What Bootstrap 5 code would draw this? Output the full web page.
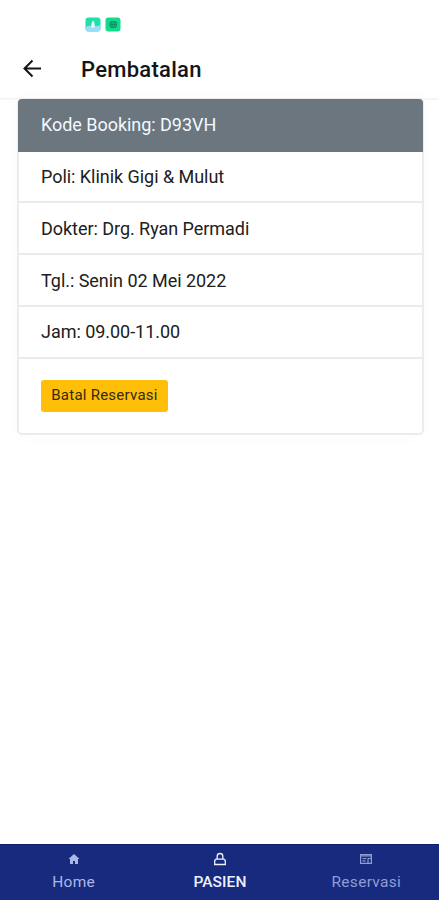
<!DOCTYPE html>
<html lang="id">
<head>
<meta charset="utf-8">
<meta name="viewport" content="width=device-width, initial-scale=1">
<title>Pembatalan</title>
<link href="https://cdn.jsdelivr.net/npm/bootstrap@5.3.0/dist/css/bootstrap.min.css" rel="stylesheet">
<style>
body{font-family:Roboto,"Liberation Sans",sans-serif;color:#151515;background:#fff}
.screen{height:900px;overflow:hidden}
.status-strip{height:40px;padding:17px 0 0 85px;gap:4px}
.status-strip svg{width:16px;height:15px}
.top-bar{height:58px;padding-left:20px;box-shadow:0 1px 2px #ececed}
.top-bar h1{font-size:22px;font-weight:500;letter-spacing:.28px;margin-left:37px;padding-top:2px}
.booking{margin:0 15px 0 17px;height:336.5px;border:2px solid #ececec;border-radius:5px;box-shadow:0 0 18px #fafafa}
.booking .list-group-item{height:51.8px;flex-shrink:0;padding:0 22px;font-size:18px;letter-spacing:-.04px;border-color:#ebebeb;border-width:0 0 2px;color:#202020}
.booking .list-group-item.code-row{height:52.6px;background:#6b767e;color:#f3f9ff;margin:-1px -1px 0;padding:0 23px 2px;border:0;border-radius:4px 4px 0 0}
.booking .list-group-item.action-row{height:73.7px;border:0;border-radius:0 0 4px 4px}
.btn-cancel{width:127px;height:32px;padding:0;font-size:15px;letter-spacing:.25px;border:0;border-radius:3px;background:#ffbf08;color:#332b12}
.tab-bar{height:56px;background:#182a7d;border-top:1px solid #10206d}
.tab-bar .nav-link{padding:7px 0 0 1px;color:#8f9dd6;font-size:15.500px;line-height:22px;letter-spacing:.3px}
.tab-bar .nav-link svg{width:14px;height:14px;margin-bottom:5px}
.tab-bar .nav-link.tab-home{color:#a9b8e8}
.tab-bar .nav-link.active{color:#eef1ff;letter-spacing:.1px;font-weight:500}
</style>
</head>
<body>
<div class="screen d-flex flex-column">
  <div class="status-strip d-flex">
    <svg viewBox="0 0 16 15"><rect x=".5" y=".5" width="15" height="14" rx="3" fill="#20dfa8"/><path d="M.5 10q4-2 7-1t8-1v3.5a3 3 0 0 1-3 3h-9a3 3 0 0 1-3-3z" fill="#9bdcf8"/><path d="M8 3.5c2 2 2 6 1.500 7h-3c-.5-2-.2-5 1.500-7z" fill="#e8fcff"/></svg>
    <svg viewBox="0 0 16 15"><rect x=".5" y=".5" width="15" height="14" rx="3" fill="#13db8c"/><rect x="5" y="4.500" width="6.500" height="6" rx="2" fill="#0cae79" stroke="#0a8a66"/><path d="M6 7.500h4" stroke="#0a8a66"/></svg>
  </div>
  <header class="top-bar d-flex align-items-center flex-shrink-0">
    <svg width="24" height="24" viewBox="0 0 24 24" fill="none" stroke="#151515" stroke-width="2"><path d="M21 11.500H4.500M12.500 3.500L4.500 11.500l8 8"/></svg>
    <h1 class="mb-0">Pembatalan</h1>
  </header>
  <main class="flex-grow-1">
    <ul class="booking list-group list-group-flush">
      <li class="list-group-item code-row d-flex align-items-center">Kode Booking: D93VH</li>
      <li class="list-group-item d-flex align-items-center">Poli: Klinik Gigi &amp; Mulut</li>
      <li class="list-group-item d-flex align-items-center">Dokter: Drg. Ryan Permadi</li>
      <li class="list-group-item d-flex align-items-center">Tgl.: Senin 02 Mei 2022</li>
      <li class="list-group-item d-flex align-items-center">Jam: 09.00-11.00</li>
      <li class="list-group-item action-row d-flex align-items-center"><button type="button" class="btn btn-warning btn-cancel">Batal Reservasi</button></li>
    </ul>
  </main>
  <nav class="tab-bar nav nav-fill nav-justified flex-shrink-0">
    <a class="nav-link tab-home nav-item d-flex flex-column align-items-center" href="#"><svg viewBox="0 0 14 14"><path d="M7 2L1.500 7H3v5h3V9h2v3h3V7h1.500z" fill="currentColor"/></svg>Home</a>
    <a class="nav-link active nav-item d-flex flex-column align-items-center" href="#"><svg viewBox="0 0 14 14" fill="none" stroke="currentColor" stroke-width="1.300"><path d="M4.200 7V4.300a2.800 2.800 0 0 1 5.600 0V7M3 7.200h8l1.300 1.300v4H1.700v-4z"/></svg>PASIEN</a>
    <a class="nav-link nav-item d-flex flex-column align-items-center" href="#"><svg viewBox="0 0 14 14" fill="none" stroke="currentColor" stroke-width="1.200"><path d="M1.600 2.600h10.800v8.800H1.600zM1.600 4h10.800M3.500 6.500h4M3.500 8.800h3M9 6.500h3M9 6.500v5"/></svg>Reservasi</a>
  </nav>
</div>
<script src="https://cdn.jsdelivr.net/npm/bootstrap@5.3.0/dist/js/bootstrap.bundle.min.js"></script>
</body>
</html>
